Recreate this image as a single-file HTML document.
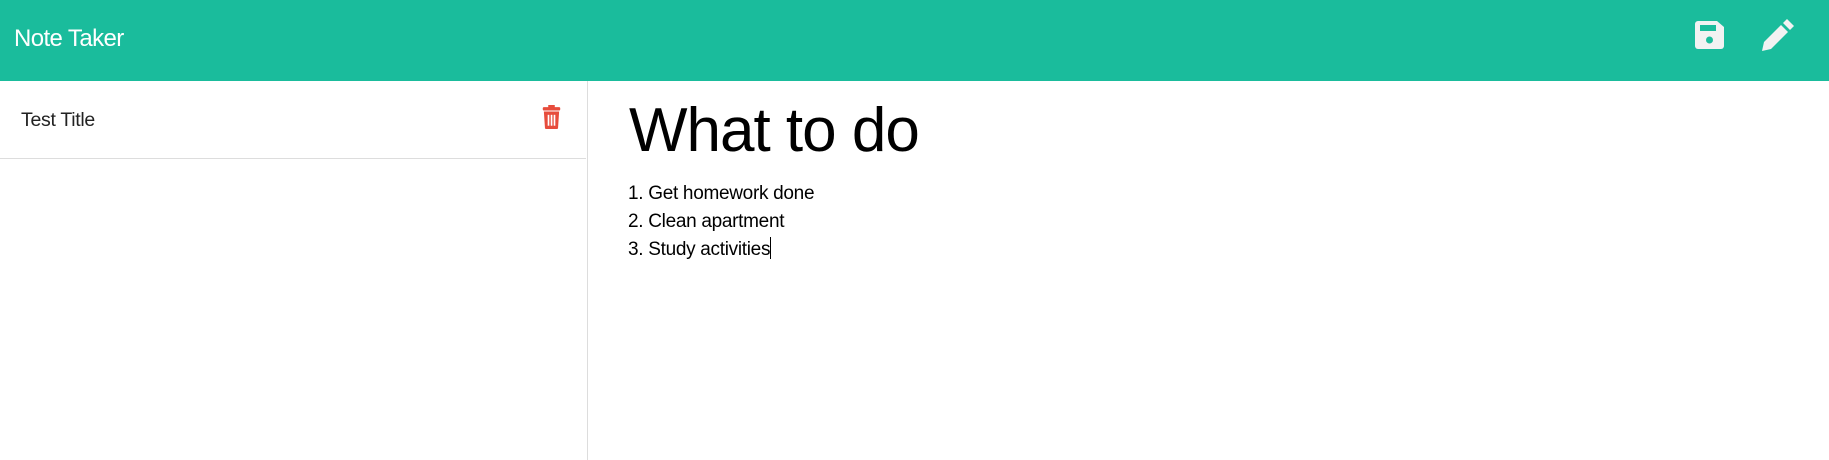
<!DOCTYPE html>
<html><head><style>
*{margin:0;padding:0;box-sizing:border-box}
body{width:1829px;height:460px;overflow:hidden;background:#fff;font-family:"Liberation Sans",sans-serif;color:#000;position:relative}
.nav{position:absolute;left:0;top:0;width:1829px;height:81px;background:#1abc9c}
.brand{position:absolute;left:14px;top:25px;font-size:24px;color:#fff;letter-spacing:-0.6px}
.side{position:absolute;left:0;top:81px;width:588px;height:379px;border-right:1px solid #ddd}
.item{position:absolute;left:0;top:0;width:586px;height:78px;border-bottom:1px solid #ddd}
.item span{position:absolute;left:21px;top:28px;font-size:19.5px;color:#222;letter-spacing:-0.3px}
.h{position:absolute;left:629px;top:95px;font-size:62px;letter-spacing:-1px;white-space:nowrap}
.txt{position:absolute;left:628px;top:180px;font-size:19px;line-height:28px;letter-spacing:-0.3px}
.cur{display:inline-block;width:1px;height:22px;background:#000;vertical-align:-4px}
</style></head><body>
<div class="nav">
<div class="brand">Note Taker</div>
<svg style="position:absolute;left:1695px;top:21px" width="29" height="28" viewBox="0 0 29 28"><path d="M3 0h19l7 6v19a3 3 0 0 1-3 3H3a3 3 0 0 1-3-3V3a3 3 0 0 1 3-3z" fill="#f2f2f2"/><rect x="5" y="4" width="16" height="6" fill="#1abc9c"/><circle cx="14.5" cy="19" r="3.5" fill="#1abc9c"/></svg>
<svg style="position:absolute;left:1760px;top:18px" width="36" height="34" viewBox="0 0 36 34"><path d="M27 1l7 7-4 4-7-7z" fill="#f2f2f2"/><path d="M21 7l7 7L11 31 2 33l2-9z" fill="#f2f2f2"/></svg>
</div>
<div class="side"><div class="item"><span>Test Title</span>
<svg style="position:absolute;left:542px;top:24px" width="19" height="24" viewBox="0 0 16 22"><rect x="0" y="2" width="16" height="3" rx="1" fill="#e74c3c"/><rect x="5" y="0" width="6" height="3" fill="#e74c3c"/><path d="M1 6h14l-1 15a1 1 0 0 1-1 1H3a1 1 0 0 1-1-1z" fill="#e74c3c"/><rect x="4.5" y="9" width="1.5" height="10" fill="#fff"/><rect x="7.3" y="9" width="1.5" height="10" fill="#fff"/><rect x="10" y="9" width="1.5" height="10" fill="#fff"/></svg>
</div></div>
<div class="h">What to do</div>
<div class="txt">1. Get homework done<br>2. Clean apartment<br>3. Study activities<span class="cur"></span></div>
</body></html>
